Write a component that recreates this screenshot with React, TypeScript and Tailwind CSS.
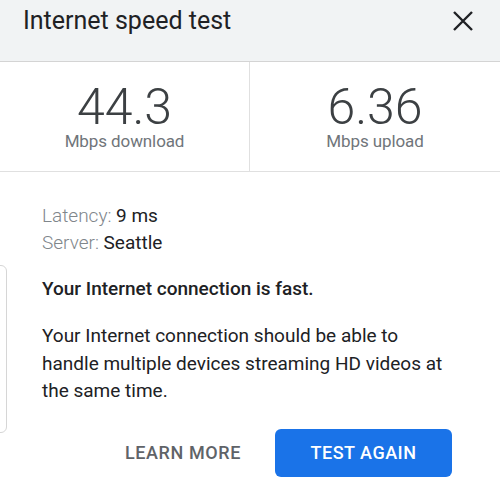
export default function App() {
  return (
    <div className="relative w-[500px] h-[487px] bg-white overflow-hidden font-['Roboto',sans-serif] text-[#202124]">
      {/* card edge peeking in from the left */}
      <div className="absolute left-[-20px] top-[265px] w-[27px] h-[168px] rounded-md border border-[#d6d6d6]" />

      <header className="h-[62px] bg-[#f1f3f4] border-b border-[#d4d4d4] flex items-start justify-between pl-[23px] pr-[27px] pt-[5px]">
        <h1 className="text-[25px] leading-[32px] text-[#202124]">Internet speed test</h1>
        <svg width="20" height="20" viewBox="0 0 20 20" className="mt-[6px]" fill="none" stroke="#202124" strokeWidth="2.4">
          <path d="M1 1 L19 19 M19 1 L1 19" />
        </svg>
      </header>

      <div className="grid grid-cols-2 h-[110px] border-b border-[#e0e0e0]">
        <div className="flex flex-col items-center pt-[20px] border-r border-[#e0e0e0]">
          <span className="text-[50px] leading-[50px] font-light text-[#3c4043]">44.3</span>
          <span className="text-[17px] leading-[18px] tracking-[-0.1px] text-[#70757a]">Mbps download</span>
        </div>
        <div className="flex flex-col items-center pt-[20px]">
          <span className="text-[50px] leading-[50px] font-light text-[#3c4043]">6.36</span>
          <span className="text-[17px] leading-[18px] tracking-[-0.1px] text-[#70757a]">Mbps upload</span>
        </div>
      </div>

      <div className="pl-[42px] pr-[40px] pt-[30px]">
        <p className="text-[19px] leading-[27px]">
          <span className="font-light text-[#80868b]">Latency: </span>
          <span>9 ms</span>
        </p>
        <p className="text-[19px] leading-[27px]">
          <span className="font-light text-[#80868b]">Server: </span>
          <span>Seattle</span>
        </p>

        <p className="mt-[19px] text-[19px] leading-[27px] font-medium">Your Internet connection is fast.</p>

        <p className="mt-[20px] text-[19px] leading-[27.5px] max-w-[414px]">
          Your Internet connection should be able to handle multiple devices streaming HD videos at the same time.
        </p>

        <div className="mt-[24px] flex items-center justify-end gap-[34px] pr-[8px]">
          <button className="text-[18px] font-medium text-[#5f6368] tracking-[0.6px]">LEARN MORE</button>
          <button className="w-[177px] h-[48px] rounded-[6px] bg-[#1a73e8] text-white text-[18px] font-medium tracking-[0.5px]">
            TEST AGAIN
          </button>
        </div>
      </div>
    </div>
  );
}
